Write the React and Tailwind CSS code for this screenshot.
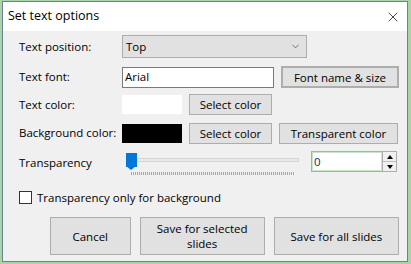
import { X, ChevronDown } from 'lucide-react';

const font = "font-['Segoe_UI','Open_Sans',sans-serif]";

function Btn({ children, className = '' }) {
  return (
    <div
      className={[
        'flex items-center justify-center border border-[#adadad] bg-[#e1e1e1] text-[11.5px] leading-[15px] text-black',
        className,
      ].join(' ')}
    >
      {children}
    </div>
  );
}

function Label({ children }) {
  return <div className="w-[103px] shrink-0 text-[11.5px] leading-none text-black">{children}</div>;
}

export default function App() {
  return (
    <div className={`h-[264px] w-[411px] bg-[#a9d4a9] pl-[2px] pt-[1px] ${font}`}>
      <div className="flex h-[261px] w-[406px] flex-col border border-[#6f7f96] bg-[#f0f0f0]">
        {/* Title bar */}
        <div className="flex h-[29px] shrink-0 items-center justify-between bg-white pl-[5px] pr-[6px]">
          <span className="text-[12.5px] text-black">Set text options</span>
          <X className="h-[16px] w-[16px] text-black" strokeWidth={1.1} />
        </div>

        {/* Form */}
        <div className="flex flex-col pl-[16px] pr-[8px]">
          <div className="mt-[4px] flex h-[23px] items-center">
            <Label>Text position:</Label>
            <div className="flex h-[23px] w-[185px] items-center justify-between border border-[#adadad] bg-[#e1e1e1] pl-[3px] pr-[5px] text-[11.5px]">
              <span>Top</span>
              <ChevronDown className="h-[11px] w-[11px] text-[#444]" strokeWidth={1.5} />
            </div>
          </div>

          <div className="mt-[8px] flex h-[22px] items-center">
            <Label>Text font:</Label>
            <div className="flex h-[21px] w-[152px] items-center border border-[#7a7a7a] bg-white pl-[2px] text-[11.5px]">
              Arial
            </div>
            <Btn className="ml-[7px] h-[22px] w-[118px] border-2 border-[#0078d7]">Font name &amp; size</Btn>
          </div>

          <div className="mt-[6px] flex h-[21px] items-center">
            <Label>Text color:</Label>
            <div className="h-[19px] w-[60px] bg-white" />
            <Btn className="ml-[7px] h-[21px] w-[83px]">Select color</Btn>
          </div>

          <div className="mt-[7px] flex h-[22px] items-center">
            <Label>Background color:</Label>
            <div className="h-[19px] w-[60px] bg-black" />
            <Btn className="ml-[7px] h-[21px] w-[83px]">Select color</Btn>
            <Btn className="ml-[7px] h-[21px] w-[119px]">Transparent color</Btn>
          </div>

          <div className="mt-[7px] flex h-[24px] items-start">
            <div className="mt-[6px] w-[103px] shrink-0 text-[11.5px] leading-none">Transparency</div>
            <div className="relative h-[24px] w-[176px]">
              <div className="absolute left-[14px] top-[7px] h-[4px] w-[163px] border border-[#d6d6d6] bg-[#e7eaea]" />
              <div className="absolute left-[4px] top-[2px] h-[14px] w-[11px] bg-[#0078d7]" />
              <div className="absolute left-[4px] top-[15px] h-0 w-0 border-x-[5.5px] border-t-[4px] border-x-transparent border-t-[#0078d7]" />
              <div className="absolute left-[9px] top-[21px] h-[3px] w-[164px] bg-[repeating-linear-gradient(90deg,#a8a8a8_0_1px,transparent_1px_2px)]" />
            </div>
            <div className="ml-[13px] flex h-[21px] w-[86px] border border-[#adadad] bg-white">
              <div className="flex flex-1 items-center border border-[#c6e6c6] pl-[1px] text-[11.5px] text-[#1a1a6a]">0</div>
              <div className="flex w-[14px] flex-col border-l border-[#adadad] bg-[#f0f0f0]">
                <div className="flex flex-1 items-center justify-center border-b border-[#c0c0c0]">
                  <div className="h-0 w-0 border-x-[3.5px] border-b-[4px] border-x-transparent border-b-black" />
                </div>
                <div className="flex flex-1 items-center justify-center">
                  <div className="h-0 w-0 border-x-[3.5px] border-t-[4px] border-x-transparent border-t-black" />
                </div>
              </div>
            </div>
          </div>

          <div className="mt-[16px] flex items-center gap-[5px]">
            <div className="h-[13px] w-[13px] border border-[#333] bg-white" />
            <span className="text-[11.5px] leading-none">Transparency only for background</span>
          </div>

          <div className="mt-[13px] flex h-[38px] gap-[9px] pl-[31px]">
            <Btn className="h-[38px] w-[81px]">Cancel</Btn>
            <Btn className="h-[38px] w-[126px] flex-col text-center">
              <span>Save for selected</span>
              <span>slides</span>
            </Btn>
            <Btn className="h-[38px] w-[126px]">Save for all slides</Btn>
          </div>
        </div>
      </div>
    </div>
  );
}
